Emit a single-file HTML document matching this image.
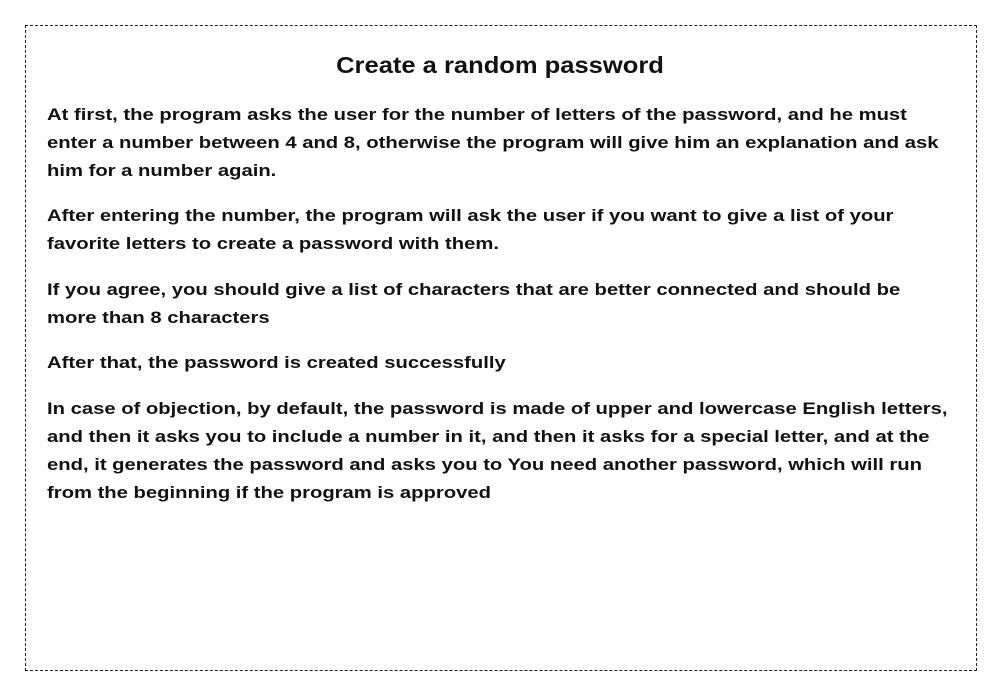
<!DOCTYPE html>
<html><head><style>
body{margin:0;width:1000px;height:696px;background:#fff;position:relative;font-family:"Liberation Sans",sans-serif;font-weight:bold;color:#111}
.box{position:absolute;left:25px;top:25px;width:950px;height:644px;border:1px dashed #222}
h1{position:absolute;left:0;width:1000px;top:50px;margin:0;text-align:center;font-size:23px;line-height:30px;transform:scaleX(1.11)}
.l{position:absolute;left:47px;font-size:17px;line-height:20px;white-space:nowrap;transform:scaleX(1.19);transform-origin:0 0}
</style></head><body>
<div class="box"></div>
<h1>Create a random password</h1>
<div class="l" style="top:105px">At first, the program asks the user for the number of letters of the password, and he must</div>
<div class="l" style="top:133px">enter a number between 4 and 8, otherwise the program will give him an explanation and ask</div>
<div class="l" style="top:161px">him for a number again.</div>
<div class="l" style="top:206px">After entering the number, the program will ask the user if you want to give a list of your</div>
<div class="l" style="top:234px">favorite letters to create a password with them.</div>
<div class="l" style="top:280px">If you agree, you should give a list of characters that are better connected and should be</div>
<div class="l" style="top:308px">more than 8 characters</div>
<div class="l" style="top:353px">After that, the password is created successfully</div>
<div class="l" style="top:399px">In case of objection, by default, the password is made of upper and lowercase English letters,</div>
<div class="l" style="top:427px">and then it asks you to include a number in it, and then it asks for a special letter, and at the</div>
<div class="l" style="top:455px">end, it generates the password and asks you to You need another password, which will run</div>
<div class="l" style="top:483px">from the beginning if the program is approved</div>
</body></html>
